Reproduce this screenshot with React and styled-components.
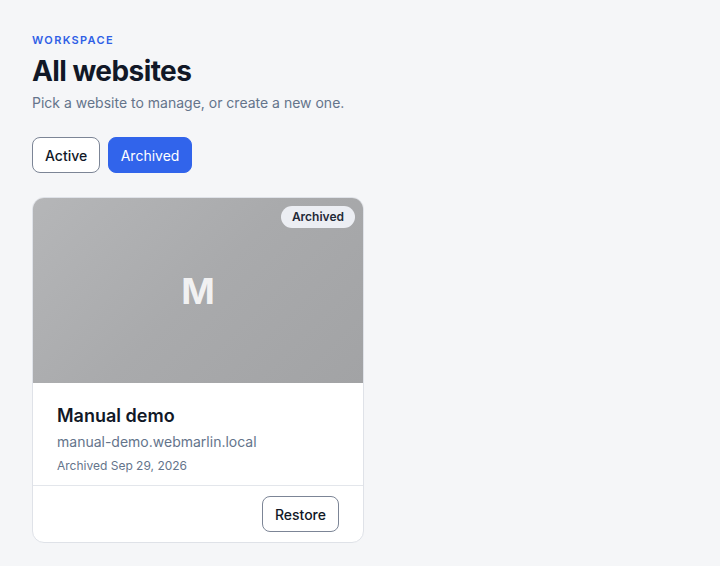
import React from "react";
import styled, { createGlobalStyle } from "styled-components";

const Global = createGlobalStyle`
  html, body { margin: 0; padding: 0; background: #f5f6f8; }
  body { font-family: Inter, "Noto Sans", sans-serif; color: #111827; -webkit-font-smoothing: antialiased; }
  * { box-sizing: border-box; }
`;

const Page = styled.main`
  min-height: 566px;
  padding: 32px 32px;
  background: #f5f6f8;
`;

const Eyebrow = styled.div`
  font-size: 11px;
  line-height: 16px;
  font-weight: 600;
  letter-spacing: 0.12em;
  color: #2f5fe6;
  text-transform: uppercase;
`;

const Title = styled.h1`
  margin: 6px 0 0;
  font-size: 28px;
  line-height: 34px;
  font-weight: 700;
  letter-spacing: -0.02em;
  color: #111827;
`;

const Subtitle = styled.p`
  margin: 5px 0 0;
  font-size: 14px;
  line-height: 20px;
  color: #64748b;
`;

const Tabs = styled.div`
  display: flex;
  gap: 8px;
  margin-top: 24px;
`;

const Tab = styled.button`
  height: 36px;
  padding: 0 ${(p) => (p.$active ? "11.5px" : "12px")};
  border-radius: 8px;
  font-family: inherit;
  font-size: 14px;
  font-weight: ${(p) => (p.$active ? 400 : 500)};
  cursor: pointer;
  border: 1px solid ${(p) => (p.$active ? "#3164eb" : "#7c8596")};
  background: ${(p) => (p.$active ? "#3164eb" : "#ffffff")};
  color: ${(p) => (p.$active ? "#ffffff" : "#111827")};
`;

const Grid = styled.div`
  display: grid;
  grid-template-columns: 332px;
  margin-top: 24px;
`;

const Card = styled.article`
  background: #fff;
  border: 1px solid #dfe2e8;
  border-radius: 12px;
  overflow: hidden;
`;

const Cover = styled.div`
  position: relative;
  height: 185px;
  display: flex;
  align-items: center;
  justify-content: center;
  background: linear-gradient(135deg, #b5b6b8 0%, #a9aaac 50%, #a2a3a5 100%);
`;

const Initial = styled.span`
  font-size: 36px;
  font-weight: 700;
  color: rgba(255, 255, 255, 0.85);
`;

const Badge = styled.span`
  position: absolute;
  top: 8px;
  right: 8px;
  padding: 3px 11px;
  border-radius: 999px;
  background: #eceef3;
  color: #1f2937;
  font-size: 12px;
  line-height: 16px;
  font-weight: 600;
`;

const Body = styled.div`
  padding: 19px 24px 11px;
`;

const Name = styled.h2`
  margin: 0;
  font-size: 18px;
  line-height: 28px;
  font-weight: 600;
  color: #111827;
`;

const Domain = styled.div`
  margin-top: 2px;
  font-size: 14px;
  line-height: 20px;
  color: #64748b;
`;

const Meta = styled.div`
  margin-top: 6px;
  font-size: 12px;
  line-height: 16px;
  color: #64748b;
`;

const Footer = styled.div`
  display: flex;
  justify-content: flex-end;
  padding: 10px 24px 10px;
  border-top: 1px solid #e3e6eb;
`;

const OutlineButton = styled.button`
  height: 36px;
  padding: 0 12px;
  border: 1px solid #7c8596;
  border-radius: 8px;
  background: #fff;
  font-family: inherit;
  font-size: 14px;
  font-weight: 500;
  color: #111827;
  cursor: pointer;
`;

export default function App() {
  return (
    <>
      <Global />
      <Page>
        <Eyebrow>Workspace</Eyebrow>
        <Title>All websites</Title>
        <Subtitle>Pick a website to manage, or create a new one.</Subtitle>
        <Tabs>
          <Tab>Active</Tab>
          <Tab $active>Archived</Tab>
        </Tabs>
        <Grid>
          <Card>
            <Cover>
              <Initial>M</Initial>
              <Badge>Archived</Badge>
            </Cover>
            <Body>
              <Name>Manual demo</Name>
              <Domain>manual-demo.webmarlin.local</Domain>
              <Meta>Archived Sep 29, 2026</Meta>
            </Body>
            <Footer>
              <OutlineButton>Restore</OutlineButton>
            </Footer>
          </Card>
        </Grid>
      </Page>
    </>
  );
}
